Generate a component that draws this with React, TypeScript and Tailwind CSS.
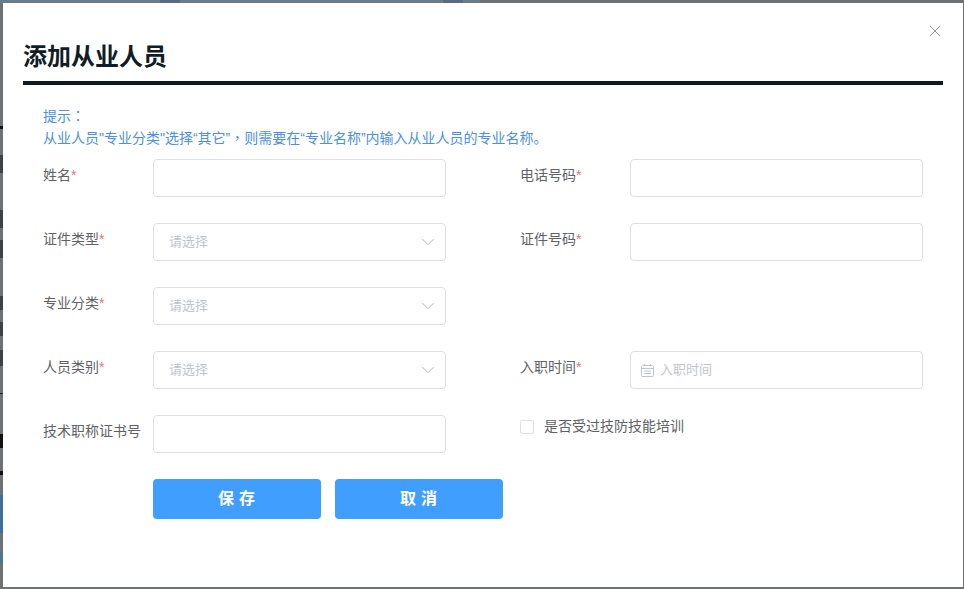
import React from 'react';
import { ChevronDown, X } from 'lucide-react';

const FONT = "font-['Liberation_Sans','Noto_Sans_CJK_SC',sans-serif]";
const PUNCT = "leading-none font-['Noto_Sans_CJK_TC',sans-serif]";

const Label: React.FC<{ text: string; required?: boolean }> = ({ text, required }) => (
    <label className="w-[110px] shrink-0 text-sm leading-[32px] text-[#606266] whitespace-nowrap">
        {text}
        {required && <span className="text-[#f56c6c]">*</span>}
    </label>
);

const TextBox: React.FC = () => (
    <div className="w-[293px] h-[38px] bg-white border border-[#dcdfe6] rounded" />
);

const SelectBox: React.FC = () => (
    <div className="w-[293px] h-[38px] bg-white border border-[#dcdfe6] rounded flex items-center justify-between pl-[15px] pr-[6px]">
        <span className="text-[13px] text-[#c0c4cc]">请选择</span>
        <ChevronDown size={22} strokeWidth={1} className="text-[#b4b8bf]" />
    </div>
);

const DateBox: React.FC = () => (
    <div className="w-[293px] h-[38px] bg-white border border-[#dcdfe6] rounded flex items-center pl-[10px] gap-[6px]">
        <svg width="13" height="13" viewBox="0 0 13 13" fill="none" stroke="#c0c4cc" strokeWidth="1">
            <rect x="0.5" y="1.5" width="12" height="11" rx="1" />
            <path d="M0.5 4.5H12.5M3 7H10M3 9.5H10M3.5 0V2M9.5 0V2" />
        </svg>
        <span className="text-[13px] text-[#c0c4cc]">入职时间</span>
    </div>
);

const Row: React.FC<{ children?: React.ReactNode }> = ({ children }) => (
    <div className="flex items-start">{children}</div>
);

const App: React.FC = () => {
    return (
        <div className={`relative w-[964px] h-[589px] overflow-hidden bg-[#6f7274] pl-[3px] pr-px pt-[3px] pb-[2px] ${FONT}`}>
            {/* page behind the overlay */}
            <span className="absolute left-0 top-0 w-[480px] h-[3px] bg-[#6a7a86]" />
            <span className="absolute left-[160px] top-0 w-[20px] h-[3px] bg-[#5a6a80]" />
            <span className="absolute left-[443px] top-0 w-[20px] h-[3px] bg-[#5a6a80]" />
            <span className="absolute left-0 top-[126px] w-[3px] h-[3px] bg-[#111]" />
            <span className="absolute left-0 top-[155px] w-[3px] h-[18px] bg-[#3f4244]" />
            <span className="absolute left-0 top-[210px] w-[3px] h-[18px] bg-[#3f4244]" />
            <span className="absolute left-0 top-[240px] w-[3px] h-[18px] bg-[#3f4244]" />
            <span className="absolute left-0 top-[296px] w-[3px] h-[14px] bg-[#3f4244]" />
            <span className="absolute left-0 top-[322px] w-[3px] h-[14px] bg-[#3f4244]" />
            <span className="absolute left-0 top-[350px] w-[3px] h-[16px] bg-[#3f4244]" />
            <span className="absolute left-0 top-[393px] w-[3px] h-px bg-[#222]" />
            <span className="absolute left-0 top-[434px] w-[3px] h-[14px] bg-[#111]" />
            <span className="absolute left-0 top-[471px] w-[3px] h-[4px] bg-[#111]" />
            <span className="absolute left-0 top-[495px] w-[3px] h-[38px] bg-[#3f6f9c]" />
            <span className="absolute left-0 top-[552px] w-[3px] h-[12px] bg-[#52758f]" />

            <div className="relative w-full h-full bg-white px-5 pt-[35px]">
                <button className="absolute right-[18px] top-[18px] text-[#909399]">
                    <X size={20} strokeWidth={1.2} />
                </button>

                <h2 className="text-2xl leading-[38px] font-bold text-[#101c26]">添加从业人员</h2>
                <div className="h-1 mt-[5px] bg-[#0d1a24]" />

                <div className="px-5 pt-5">
                    <div className="text-sm leading-[22px] text-[#4a90e2]">
                        <p>提示<span className={PUNCT}>：</span></p>
                        <p>从业人员"专业分类"选择“其它”<span className={PUNCT}>，</span>则需要在“专业名称”内输入从业人员的专业名称。</p>
                    </div>

                    <div className="mt-[10px] grid grid-cols-[403px_403px] justify-between gap-y-[26px]">
                        <Row><Label text="姓名" required /><TextBox /></Row>
                        <Row><Label text="电话号码" required /><TextBox /></Row>

                        <Row><Label text="证件类型" required /><SelectBox /></Row>
                        <Row><Label text="证件号码" required /><TextBox /></Row>

                        <Row><Label text="专业分类" required /><SelectBox /></Row>
                        <Row />

                        <Row><Label text="人员类别" required /><SelectBox /></Row>
                        <Row><Label text="入职时间" required /><DateBox /></Row>

                        <Row><Label text="技术职称证书号" /><TextBox /></Row>
                        <div className="flex items-center h-[22px]">
                            <span className="w-[14px] h-[14px] mt-[2px] bg-white border border-[#dcdfe6] rounded-[2px]" />
                            <span className="ml-[10px] text-sm text-[#606266]">是否受过技防技能培训</span>
                        </div>
                    </div>

                    <div className="mt-[26px] ml-[110px] flex gap-[14px]">
                        <button className="w-[168px] h-10 pl-[4px] rounded bg-[#409eff] text-white text-base font-bold tracking-[5px]">保存</button>
                        <button className="w-[168px] h-10 pl-[4px] rounded bg-[#409eff] text-white text-base font-bold tracking-[5px]">取消</button>
                    </div>
                </div>
            </div>
        </div>
    );
};

export default App;
